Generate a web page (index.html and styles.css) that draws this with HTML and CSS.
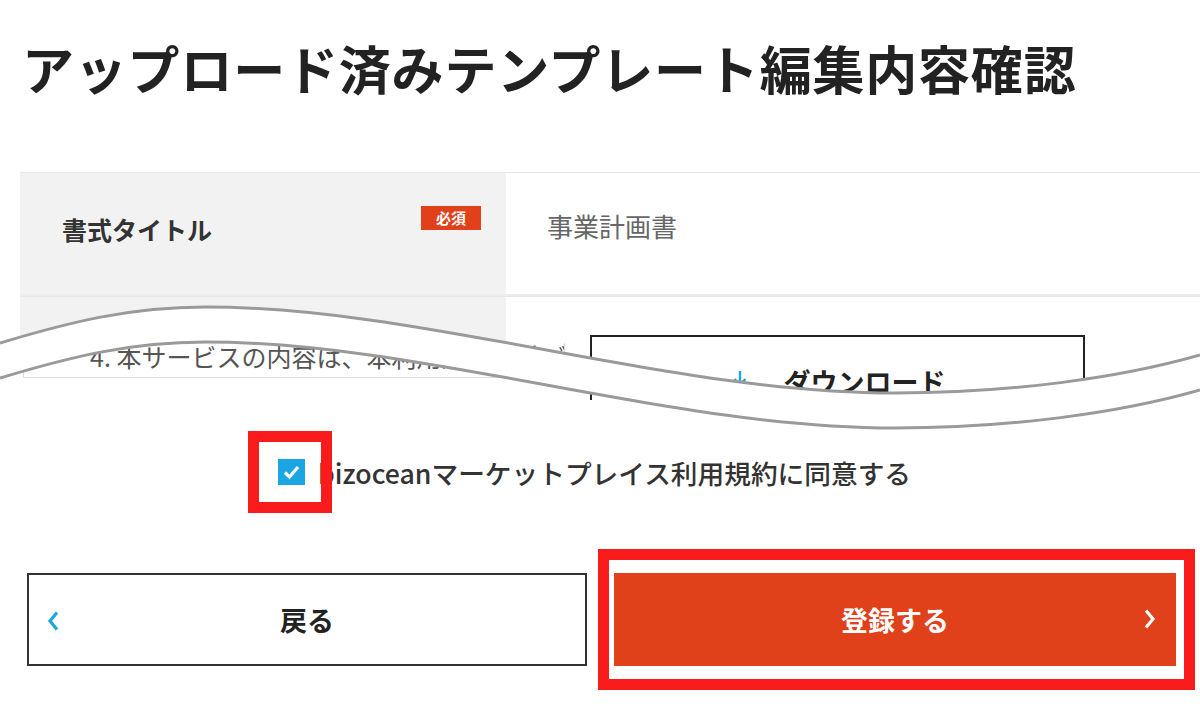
FILE: index.html
```html
<!DOCTYPE html>
<html lang="ja">
<head>
  <meta charset="utf-8">
  <title>アップロード済みテンプレート編集内容確認</title>
  <meta name="viewport" content="width=device-width, initial-scale=1.0">
  <link rel="stylesheet" href="styles.css">
</head>
<body>
  <main class="page">
    <h1 class="title">アップロード済みテンプレート編集内容確認</h1>

    <div class="cut">
      <div class="cut-upper">
        <div class="row">
          <div class="row-label">
            <span>書式タイトル</span>
            <span class="badge">必須</span>
          </div>
          <div class="row-value">事業計画書</div>
        </div>
        <div class="row">
          <div class="row-label"></div>
          <div class="row-value"></div>
        </div>
      </div>

      <div class="cut-lower">
        <div class="terms">4. 本サービスの内容は、本利用規約に基づき変更されることがあります。</div>
        <button class="download" type="button">
          <svg class="download-icon" width="20" height="22" viewBox="0 0 20 22">
            <path d="M10 1v13M4.5 9l5.5 5.5L15.5 9M2 15v5h16v-5" fill="none" stroke="#1ba6e3" stroke-width="2.4"/>
          </svg>
          ダウンロード
        </button>
      </div>

      <!-- 省略の波線 -->
      <svg class="wave" width="1200" height="150" viewBox="0 290 1200 150">
        <path d="M0,343 C70,322 130,307 205,307 C425,307 665,393 895,393 C1010,393 1120,378 1200,355 L1200,390 C1120,413 1010,428 895,428 C665,428 425,342 205,342 C130,342 70,357 0,378 Z" fill="#fff"/>
        <path d="M0,343 C70,322 130,307 205,307 C425,307 665,393 895,393 C1010,393 1120,378 1200,355" fill="none" stroke="#9a9a9a" stroke-width="3"/>
        <path d="M0,378 C70,357 130,342 205,342 C425,342 665,428 895,428 C1010,428 1120,413 1200,390" fill="none" stroke="#9a9a9a" stroke-width="3"/>
      </svg>
    </div>

    <label class="agree">
      <span class="check">
        <svg width="27" height="26" viewBox="0 0 27 26">
          <rect width="27" height="26" fill="#1ba6e3"/>
          <path d="M7 13.5l4.5 4.5 8.5-10" fill="none" stroke="#fff" stroke-width="3.2"/>
        </svg>
        <span class="mark mark-check"></span>
      </span>
      bizoceanマーケットプレイス利用規約に同意する
    </label>

    <div class="actions">
      <button class="btn btn-back" type="button">
        <svg class="arrow arrow-left" width="16" height="24" viewBox="0 0 16 24">
          <path d="M12 3.5L5 12l7 8.5" fill="none" stroke="#1ba6e3" stroke-width="3.2"/>
        </svg>
        戻る
      </button>
      <div class="submit-wrap">
        <button class="btn btn-submit" type="submit">
          登録する
          <svg class="arrow arrow-right" width="16" height="24" viewBox="0 0 16 24">
            <path d="M4 3.5l7 8.5-7 8.5" fill="none" stroke="#fff" stroke-width="3.2"/>
          </svg>
        </button>
      </div>
    </div>
  </main>
</body>
</html>
```

FILE: styles.css
```css
body {
  margin: 0;
  background-color: #fff;
  font-family: "Noto Sans CJK JP", "Noto Sans", sans-serif;
  color: #222;
}

.page {
  width: 1200px;
}

.title {
  margin: 0;
  padding: 36px 0 0 22px;
  font-size: 52px;
  line-height: 64px;
  font-weight: 700;
  letter-spacing: 0.8px;
  color: #222;
}

/* table with the cut in the middle */
.cut {
  position: relative;
  margin-top: 72px;
}

.cut-upper {
  height: 171px;
  overflow: hidden;
}

.row {
  display: grid;
  grid-template-columns: 486px 664px;
  margin-left: 20px;
  height: 124px;
  box-sizing: border-box;
  border-top: 1px solid #e8e8e8;
  border-bottom: 2px solid #ececec;
}

.row-label {
  display: flex;
  justify-content: space-between;
  align-items: center;
  padding: 0 25px 10px 42px;
  background-color: #f2f2f2;
  font-size: 25px;
  font-weight: 700;
  color: #333;
}

.badge {
  align-self: flex-start;
  margin-top: 33px;
  width: 60px;
  height: 24px;
  line-height: 24px;
  text-align: center;
  background-color: #e0401a;
  color: #fff;
  font-size: 15px;
  font-weight: 700;
}

.row-value {
  display: flex;
  align-items: center;
  padding: 0 0 16px 41px;
  font-size: 26px;
  color: #666;
}

.cut-lower {
  display: flex;
  align-items: flex-start;
  margin-top: -13px;
  height: 70px;
  overflow: hidden;
}

.terms {
  margin: 13px 0 0 23px;
  width: 542px;
  height: 35px;
  box-sizing: border-box;
  padding: 0 0 0 66px;
  border: 1px solid #dcdcdc;
  border-top: none;
  background-color: #fff;
  font-size: 25px;
  line-height: 26px;
  color: #555;
  white-space: nowrap;
  overflow: hidden;
}

.download {
  display: flex;
  justify-content: center;
  align-items: center;
  gap: 34px;
  margin: 5px 0 0 25px;
  width: 495px;
  height: 92px;
  padding: 0;
  border: 2px solid #222;
  background-color: #fff;
  font-family: inherit;
  font-size: 27px;
  font-weight: 700;
  color: #222;
}

.wave {
  position: absolute;
  left: 0;
  top: 118px;
}

/* agreement */
.agree {
  display: flex;
  justify-content: center;
  align-items: center;
  gap: 13px;
  margin: 50px 11px 0 0;
  height: 44px;
  font-size: 26.7px;
  font-weight: 500;
  color: #333;
}

.check {
  position: relative;
  display: block;
  width: 27px;
  height: 26px;
}

.check svg {
  display: block;
}

.mark {
  position: absolute;
  border: 11px solid #fa1c1c;
}

.mark-check {
  left: -30px;
  right: -27px;
  top: -28px;
  bottom: -28px;
}

/* buttons */
.actions {
  display: grid;
  grid-template-columns: 560px 597px;
  align-items: center;
  gap: 11px;
  margin: 55px 0 0 27px;
}

.btn {
  position: relative;
  display: flex;
  justify-content: center;
  align-items: center;
  width: 100%;
  height: 93px;
  font-family: inherit;
  font-size: 27px;
  font-weight: 700;
  cursor: pointer;
}

.btn-back {
  border: 2px solid #333;
  background-color: #fff;
  color: #222;
}

/* red highlight round the submit button */
.submit-wrap {
  padding: 13px 8px 13px 5px;
  border: 11px solid #fa1c1c;
}

.btn-submit {
  border: none;
  background-color: #e0401a;
  color: #fff;
}

.arrow {
  position: absolute;
  top: 34px;
}

.arrow-left {
  left: 16px;
}

.arrow-right {
  right: 18px;
}
```
